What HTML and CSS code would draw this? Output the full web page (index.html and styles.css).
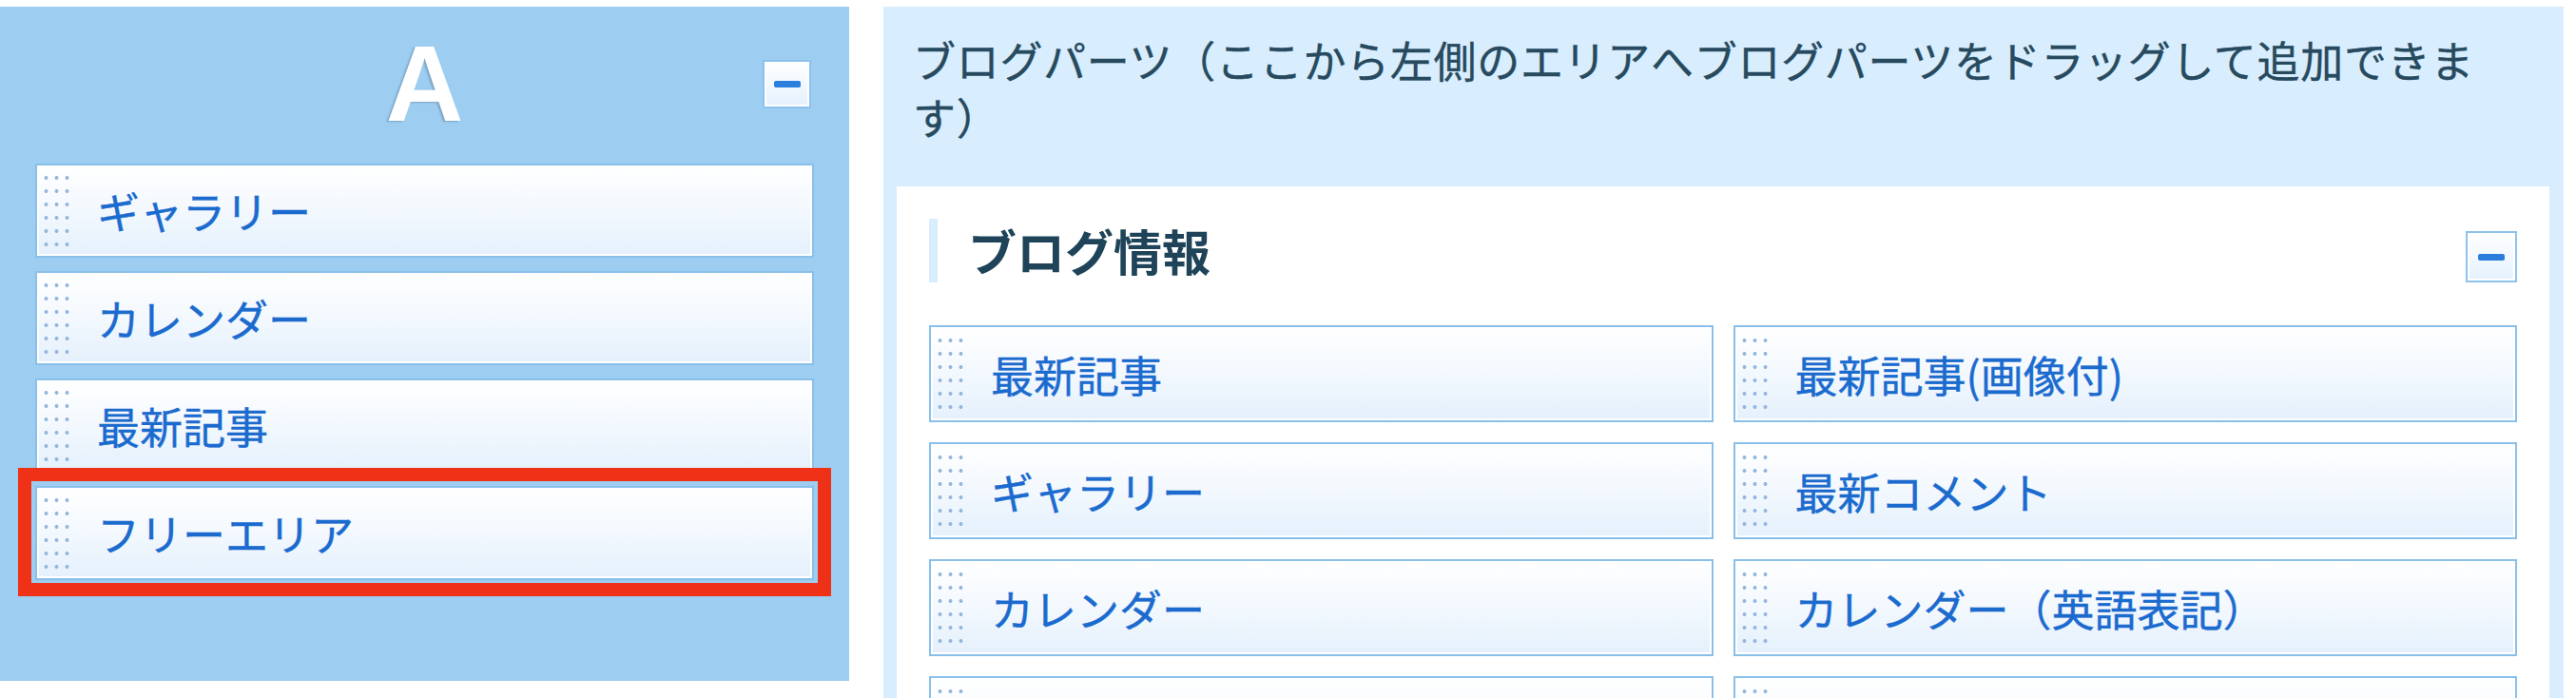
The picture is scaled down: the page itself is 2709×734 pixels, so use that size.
FILE: index.html
```html
<!DOCTYPE html>
<html lang="ja">
<head>
    <meta charset="UTF-8">
    <meta name="viewport" content="width=device-width, initial-scale=1.0">
    <title>ブログパーツ設定</title>

    <link rel="stylesheet" href="styles.css">
</head>
<body>
    <div class="page">
        <div class="area">
            <div class="area-head">
                <span></span>
                <h2 class="area-name">A</h2>
                <button class="toggle"><span class="minus"></span></button>
            </div>
            <ul class="part-list">
                <li class="part"><span class="grip"></span>ギャラリー</li>
                <li class="part"><span class="grip"></span>カレンダー</li>
                <li class="part"><span class="grip"></span>最新記事</li>
                <li class="part selected"><span class="grip"></span>フリーエリア</li>
            </ul>
        </div>

        <div class="parts-panel">
            <p class="parts-note">ブログパーツ（ここから左側のエリアへブログパーツをドラッグして追加できます）</p>
            <div class="parts-box">
                <div class="group-head">
                    <h3 class="group-title">ブログ情報</h3>
                    <button class="toggle toggle-lg"><span class="minus"></span></button>
                </div>
                <ul class="part-grid">
                    <li class="part"><span class="grip"></span>最新記事</li>
                    <li class="part"><span class="grip"></span>最新記事(画像付)</li>
                    <li class="part"><span class="grip"></span>ギャラリー</li>
                    <li class="part"><span class="grip"></span>最新コメント</li>
                    <li class="part"><span class="grip"></span>カレンダー</li>
                    <li class="part"><span class="grip"></span>カレンダー（英語表記）</li>
                    <!-- 画面外に続く行 -->
                    <li class="part"><span class="grip"></span></li>
                    <li class="part"><span class="grip"></span></li>
                </ul>
            </div>
        </div>
    </div>
</body>
</html>
```

FILE: styles.css
```css
body {
    margin: 0;
    height: 734px;
    overflow: hidden;
    background-color: #fff;
    font-family: "Noto Sans CJK JP", "Noto Sans", sans-serif;
}

.page {
    display: flex;
    align-items: flex-start;
    gap: 36px;
    padding-top: 7px;
}

/* エリア A */
.area {
    width: 893px;
    height: 709px;
    box-sizing: border-box;
    padding: 25px 37px 0;
    background-color: #9dcdf0;
}

.area-head {
    display: grid;
    grid-template-columns: 1fr auto 1fr;
    align-items: center;
}

.area-name {
    margin: 0;
    font: bold 113px/113px "Liberation Sans", Arial, sans-serif;
    color: #fff;
    text-shadow: -2px 1px 2px rgba(60, 90, 120, 0.35);
}

.area-head .toggle {
    justify-self: end;
    margin-right: 3px;
}

.toggle {
    width: 51px;
    height: 51px;
    padding: 0;
    border: 2px solid #8cc2ec;
    box-shadow: inset 0 0 0 2px #fff;
    background: linear-gradient(#fff, #e4f1fd);
    display: flex;
    align-items: center;
    justify-content: center;
    cursor: pointer;
}

.toggle-lg {
    width: 54px;
    height: 54px;
}

.minus {
    width: 28px;
    height: 7px;
    border-radius: 2px;
    background-color: #2b7edb;
}

.part-list {
    list-style: none;
    margin: 27px 0 0;
    padding: 0;
    display: flex;
    flex-direction: column;
    gap: 14px;
}

.part {
    position: relative;
    height: 99px;
    box-sizing: border-box;
    display: flex;
    align-items: center;
    padding-left: 4px;
    border: 2px solid #89c0ea;
    box-shadow: inset 0 0 0 2px #fff;
    background: linear-gradient(#fff 0%, #f4f9fe 45%, #e4f0fc 100%);
    font-size: 45px;
    line-height: 1;
    color: #1b6bcf;
    white-space: nowrap;
    -webkit-text-stroke: 0.4px #1b6bcf;
}

.grip {
    flex-shrink: 0;
    width: 33px;
    height: 84px;
    margin-right: 26px;
    background: radial-gradient(circle, #94b5dc 1.6px, transparent 2.3px) 0 0 / 11px 14px;
}

.part.selected::after {
    content: "";
    position: absolute;
    left: -20px;
    right: -20px;
    top: -21px;
    bottom: -19px;
    border: 14px solid #ef3118;
}

/* ブログパーツ一覧 */
.parts-panel {
    width: 1767px;
    height: 760px;
    box-sizing: border-box;
    padding: 26px 15px 0 14px;
    background-color: #d8edfd;
}

.parts-note {
    margin: 0 0 43px;
    padding: 0 16px 0 17px;
    font-size: 45px;
    letter-spacing: 0.7px;
    line-height: 60px;
    color: #274a5f;
    -webkit-text-stroke: 0.4px #274a5f;
}

.parts-box {
    height: 600px;
    padding: 34px 34px 0;
    background-color: #fff;
}

.group-head {
    display: flex;
    justify-content: space-between;
    align-items: flex-end;
}

.group-title {
    margin: 0;
    padding-left: 32px;
    border-left: 9px solid #d8edfd;
    font-size: 51px;
    font-weight: bold;
    line-height: 67px;
    color: #1f4459;
}

.part-grid {
    list-style: none;
    margin: 45px 0 0;
    padding: 0;
    display: grid;
    grid-template-columns: 1fr 1fr;
    gap: 21px;
}

.part-grid .part {
    height: 102px;
}
```
